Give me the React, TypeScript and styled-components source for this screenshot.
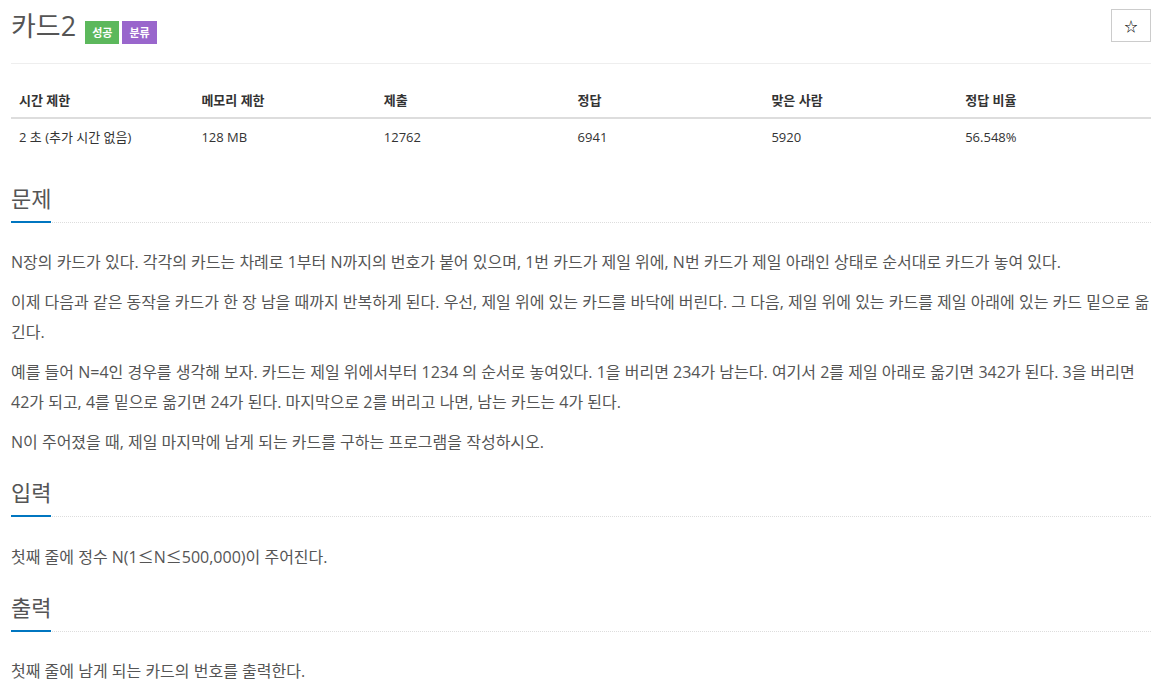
import React from "react";
import styled, { createGlobalStyle } from "styled-components";

const GlobalStyle = createGlobalStyle`
  html, body { margin: 0; padding: 0; background: #fff; }
  body {
    font-family: "Open Sans", "Noto Sans CJK KR", sans-serif;
    color: #555;
  }
  * { box-sizing: border-box; }
`;

const Page = styled.div`
  padding: 0 11px;
  width: 1162px;
`;

const PageHeader = styled.div`
  display: flex;
  align-items: flex-start;
  justify-content: space-between;
  height: 64px;
  padding-top: 9px;
  border-bottom: 1px solid #eee;
`;

const TitleGroup = styled.div`
  display: flex;
  align-items: flex-start;
  gap: 3px;
`;

const Title = styled.h1`
  margin: 0 6px 0 0;
  font-size: 27px;
  font-weight: 400;
  line-height: 33px;
  height: 33px;
  color: #555;
`;

const Label = styled.span<{ $bg: string }>`
  display: inline-flex;
  align-items: center;
  justify-content: center;
  margin-top: 12px;
  height: 23px;
  padding: 0 7px;
  background: ${(p) => p.$bg};
  color: #fff;
  font-size: 11px;
  line-height: 23px;
  font-weight: 700;
`;

const StarButton = styled.button`
  width: 40px;
  height: 33px;
  border: 1px solid #ccc;
  background: #fff;
  color: #000;
  font-size: 13px;
  padding: 0;
  display: flex;
  align-items: center;
  justify-content: center;
  font-family: "Noto Sans CJK KR", sans-serif;
`;

const Table = styled.table`
  width: 100%;
  border-collapse: separate;
  border-spacing: 0;
  margin: 19px 0 18px;
  font-size: 13px;
  color: #333;
`;

const Th = styled.th<{ $w: number }>`
  width: ${(p) => p.$w}%;
  text-align: left;
  font-weight: 700;
  padding: 8px;
  height: 36px;
  line-height: 18px;
  border-bottom: 2px solid #ddd;
`;

const Td = styled.td`
  padding: 8px;
  height: 36px;
  line-height: 20px;
`;

const Section = styled.section`
  padding-top: 14px;
`;

const Headline = styled.div`
  border-bottom: 1px dotted #ddd;
  margin-bottom: 24px;
  height: 36px;
`;

const SectionTitle = styled.h2`
  display: inline-block;
  margin: 0;
  padding-bottom: 12px;
  height: 36px;
  font-size: 22px;
  font-weight: 400;
  line-height: 22px;
  color: #555;
  border-bottom: 2px solid #0076c0;
`;

const Para = styled.p`
  margin: 0 0 10px;
  font-size: 16px;
  line-height: 30px;
  color: #555;
`;

const MathSym = styled.span`
  font-family: "Noto Sans CJK KR", sans-serif;
`;

const headers: [string, number][] = [
  ["시간 제한", 16],
  ["메모리 제한", 16],
  ["제출", 17],
  ["정답", 17],
  ["맞은 사람", 17],
  ["정답 비율", 17],
];

const values = ["2 초 (추가 시간 없음)", "128 MB", "12762", "6941", "5920", "56.548%"];

const sections: { title: string; paras: React.ReactNode[] }[] = [
  {
    title: "문제",
    paras: [
      "N장의 카드가 있다. 각각의 카드는 차례로 1부터 N까지의 번호가 붙어 있으며, 1번 카드가 제일 위에, N번 카드가 제일 아래인 상태로 순서대로 카드가 놓여 있다.",
      "이제 다음과 같은 동작을 카드가 한 장 남을 때까지 반복하게 된다. 우선, 제일 위에 있는 카드를 바닥에 버린다. 그 다음, 제일 위에 있는 카드를 제일 아래에 있는 카드 밑으로 옮긴다.",
      "예를 들어 N=4인 경우를 생각해 보자. 카드는 제일 위에서부터 1234 의 순서로 놓여있다. 1을 버리면 234가 남는다. 여기서 2를 제일 아래로 옮기면 342가 된다. 3을 버리면 42가 되고, 4를 밑으로 옮기면 24가 된다. 마지막으로 2를 버리고 나면, 남는 카드는 4가 된다.",
      "N이 주어졌을 때, 제일 마지막에 남게 되는 카드를 구하는 프로그램을 작성하시오.",
    ],
  },
  {
    title: "입력",
    paras: [
      <>
        첫째 줄에 정수 N(1<MathSym>≤</MathSym>N<MathSym>≤</MathSym>500,000)이 주어진다.
      </>,
    ],
  },
  { title: "출력", paras: ["첫째 줄에 남게 되는 카드의 번호를 출력한다."] },
];

export default function App() {
  return (
    <Page>
      <GlobalStyle />
      <PageHeader>
        <TitleGroup>
          <Title>카드2</Title>
          <Label $bg="#5cb85c">성공</Label>
          <Label $bg="#9966cc">분류</Label>
        </TitleGroup>
        <StarButton aria-label="즐겨찾기">☆</StarButton>
      </PageHeader>
      <Table>
        <thead>
          <tr>
            {headers.map(([h, w]) => (
              <Th key={h} $w={w}>
                {h}
              </Th>
            ))}
          </tr>
        </thead>
        <tbody>
          <tr>
            {values.map((v) => (
              <Td key={v}>{v}</Td>
            ))}
          </tr>
        </tbody>
      </Table>
      {sections.map((s) => (
        <Section key={s.title}>
          <Headline>
            <SectionTitle>{s.title}</SectionTitle>
          </Headline>
          {s.paras.map((p, i) => (
            <Para key={i}>{p}</Para>
          ))}
        </Section>
      ))}
    </Page>
  );
}
